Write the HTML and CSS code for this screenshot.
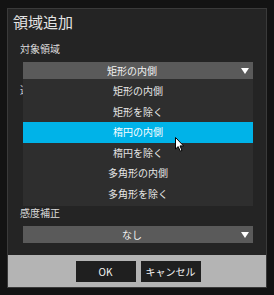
FILE: index.html
```html
<!DOCTYPE html>
<html lang="ja">
<head>
    <meta charset="UTF-8">
    <title>領域追加</title>
    <link rel="stylesheet" href="styles.css">
</head>
<body>
    <div class="dialog">
        <div class="title">領域追加</div>

        <div class="dialog-body">
            <div class="field">
                <div class="label">対象領域</div>
                <div class="select-wrap">
                    <div class="select">
                        <span class="select-text">矩形の内側</span>
                        <span class="arrow"></span>
                    </div>
                    <!-- open dropdown list -->
                    <ul class="options">
                        <li>矩形の内側</li>
                        <li>矩形を除く</li>
                        <li class="active">楕円の内側</li>
                        <li>楕円を除く</li>
                        <li>多角形の内側</li>
                        <li>多角形を除く</li>
                    </ul>
                </div>
            </div>

            <!-- hidden under the open list -->
            <div class="field">
                <div class="label">選択方法</div>
                <div class="select">
                    <span class="select-text"></span>
                    <span class="arrow"></span>
                </div>
            </div>

            <div class="field field-last">
                <div class="label">感度補正</div>
                <div class="select">
                    <span class="select-text">なし</span>
                    <span class="arrow"></span>
                </div>
            </div>
        </div>

        <div class="footer">
            <button class="btn">OK</button>
            <button class="btn">キャンセル</button>
        </div>

        <svg class="cursor" width="10" height="16" viewBox="0 0 10 16">
            <path d="M0.5 0.5 L0.5 12 L3.2 9.6 L5.2 14.2 L7 13.4 L5 8.9 L8.6 8.9 Z" fill="#fff" stroke="#000" stroke-width="1"/>
        </svg>
    </div>
</body>
</html>
```

FILE: styles.css
```css
body {
    margin: 0;
    padding: 0;
    width: 274px;
    height: 295px;
    overflow: hidden;
    background-color: #131313;
    font-family: "Noto Sans CJK JP", "Noto Sans", sans-serif;
}

.dialog {
    position: relative;
    box-sizing: border-box;
    margin: 8px 0 0 7px;
    width: 260px;
    height: 280px;
    border: 1px solid #3a3a3a;
    background-color: #242424;
    display: flex;
    flex-direction: column;
}

.title {
    margin-top: 3px;
    padding-left: 5px;
    font-size: 15px;
    line-height: 20px;
    color: #e4e4e4;
}

.dialog-body {
    flex: 1;
    display: flex;
    flex-direction: column;
    padding: 10px 13px 12px 15px;
}

.field {
    margin-bottom: 4px;
}

.field-last {
    margin-top: auto;
    margin-bottom: 0;
}

.label {
    margin-left: -3px;
    margin-bottom: 6px;
    font-size: 10px;
    line-height: 14px;
    color: #dcdcdc;
}

.select-wrap {
    position: relative;
}

.select {
    height: 17px;
    background-color: #5a5a5a;
    display: flex;
    align-items: center;
    padding-right: 4px;
}

.select-text {
    flex: 1;
    text-align: center;
    font-size: 10px;
    line-height: 17px;
    color: #f2f2f2;
}

.arrow {
    width: 0;
    height: 0;
    border-left: 4px solid transparent;
    border-right: 4px solid transparent;
    border-top: 6px solid #fff;
}

.options {
    position: absolute;
    top: 100%;
    left: 0;
    right: 0;
    z-index: 2;
    margin: 0;
    padding: 2px 0;
    list-style: none;
    background-color: #2e2e2e;
}

.options li {
    height: 20.5px;
    line-height: 20.5px;
    text-align: center;
    font-size: 10px;
    color: #e6e6e6;
}

.options li.active {
    background-color: #00b3e8;
    color: #fff;
}

.footer {
    height: 32px;
    background-color: #b4b4b4;
    display: flex;
    justify-content: center;
    align-items: center;
    gap: 5px;
    padding-left: 2px;
}

.btn {
    width: 60px;
    height: 21px;
    padding: 0;
    border: none;
    background-color: #1f1f1f;
    color: #f4f4f4;
    font-family: "Noto Sans CJK JP", "Noto Sans", sans-serif;
    font-size: 10px;
}

.cursor {
    position: absolute;
    left: 167px;
    top: 128px;
    z-index: 3;
}
```
